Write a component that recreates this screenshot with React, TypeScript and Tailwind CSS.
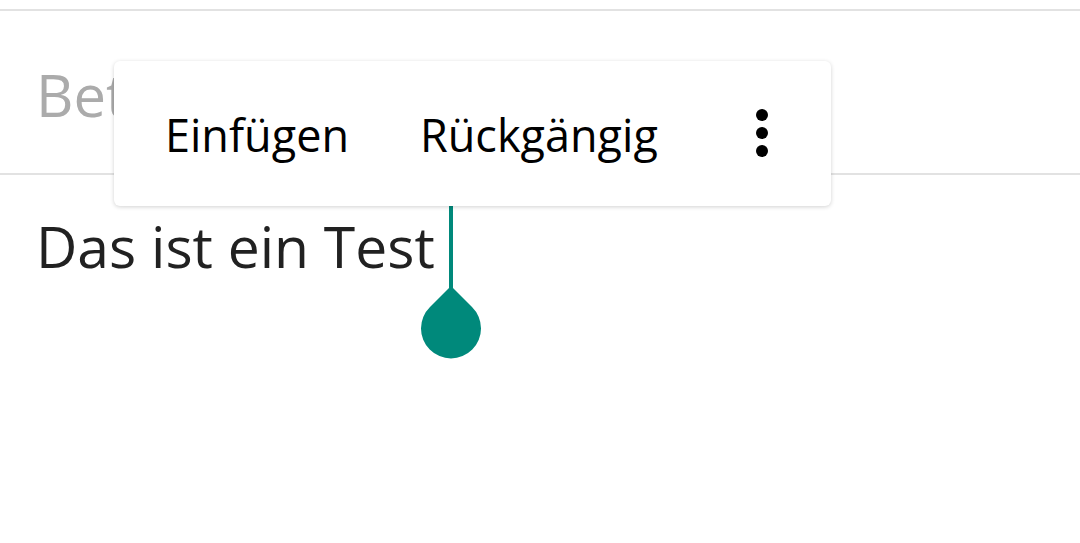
import React from "react";

export default function App() {
  return (
    <div
      className="relative w-[1080px] h-[543px] overflow-hidden bg-white"
      style={{ fontFamily: '"Open Sans", "Noto Sans", sans-serif' }}
    >
      <div className="h-[9px]" />
      <div className="h-[2px] bg-[#e2e2e2]" />
      <div className="h-[162px] flex items-center pl-[36px] pt-[6px]">
        <span className="text-[58px] leading-none text-[#ababab]">Betreff</span>
      </div>
      <div className="h-[2px] bg-[#e2e2e2]" />
      <div className="flex items-start pl-[36px] pt-[41px]">
        <span className="text-[57px] leading-[60px] text-[#212121]">Das ist ein Test</span>
      </div>

      {/* cursor + handle */}
      <div className="absolute left-[449px] top-[205px] w-[4px] h-[84px] bg-[#00897b]" />
      <svg className="absolute left-[420px] top-[284px]" width="62" height="76" viewBox="0 0 62 76">
        <path d="M31 2 L52 23 A30 30 0 1 1 10 23 Z" fill="#00897b" />
      </svg>

      {/* popup */}
      <div className="absolute left-[114px] top-[61px] w-[717px] h-[145px] bg-white rounded-[6px] shadow-[0_1px_4px_rgba(0,0,0,0.18)] flex items-center">
        <span className="ml-[51px] text-[45px] text-black leading-none pt-[1px]">Einfügen</span>
        <span className="ml-[71px] text-[45px] text-black leading-none pt-[1px]">Rückgängig</span>
        <div className="ml-auto mr-[63px] flex flex-col items-center gap-[6px] pb-[2px]">
          <div className="w-[12px] h-[12px] rounded-full bg-black" />
          <div className="w-[12px] h-[12px] rounded-full bg-black" />
          <div className="w-[12px] h-[12px] rounded-full bg-black" />
        </div>
      </div>
    </div>
  );
}
